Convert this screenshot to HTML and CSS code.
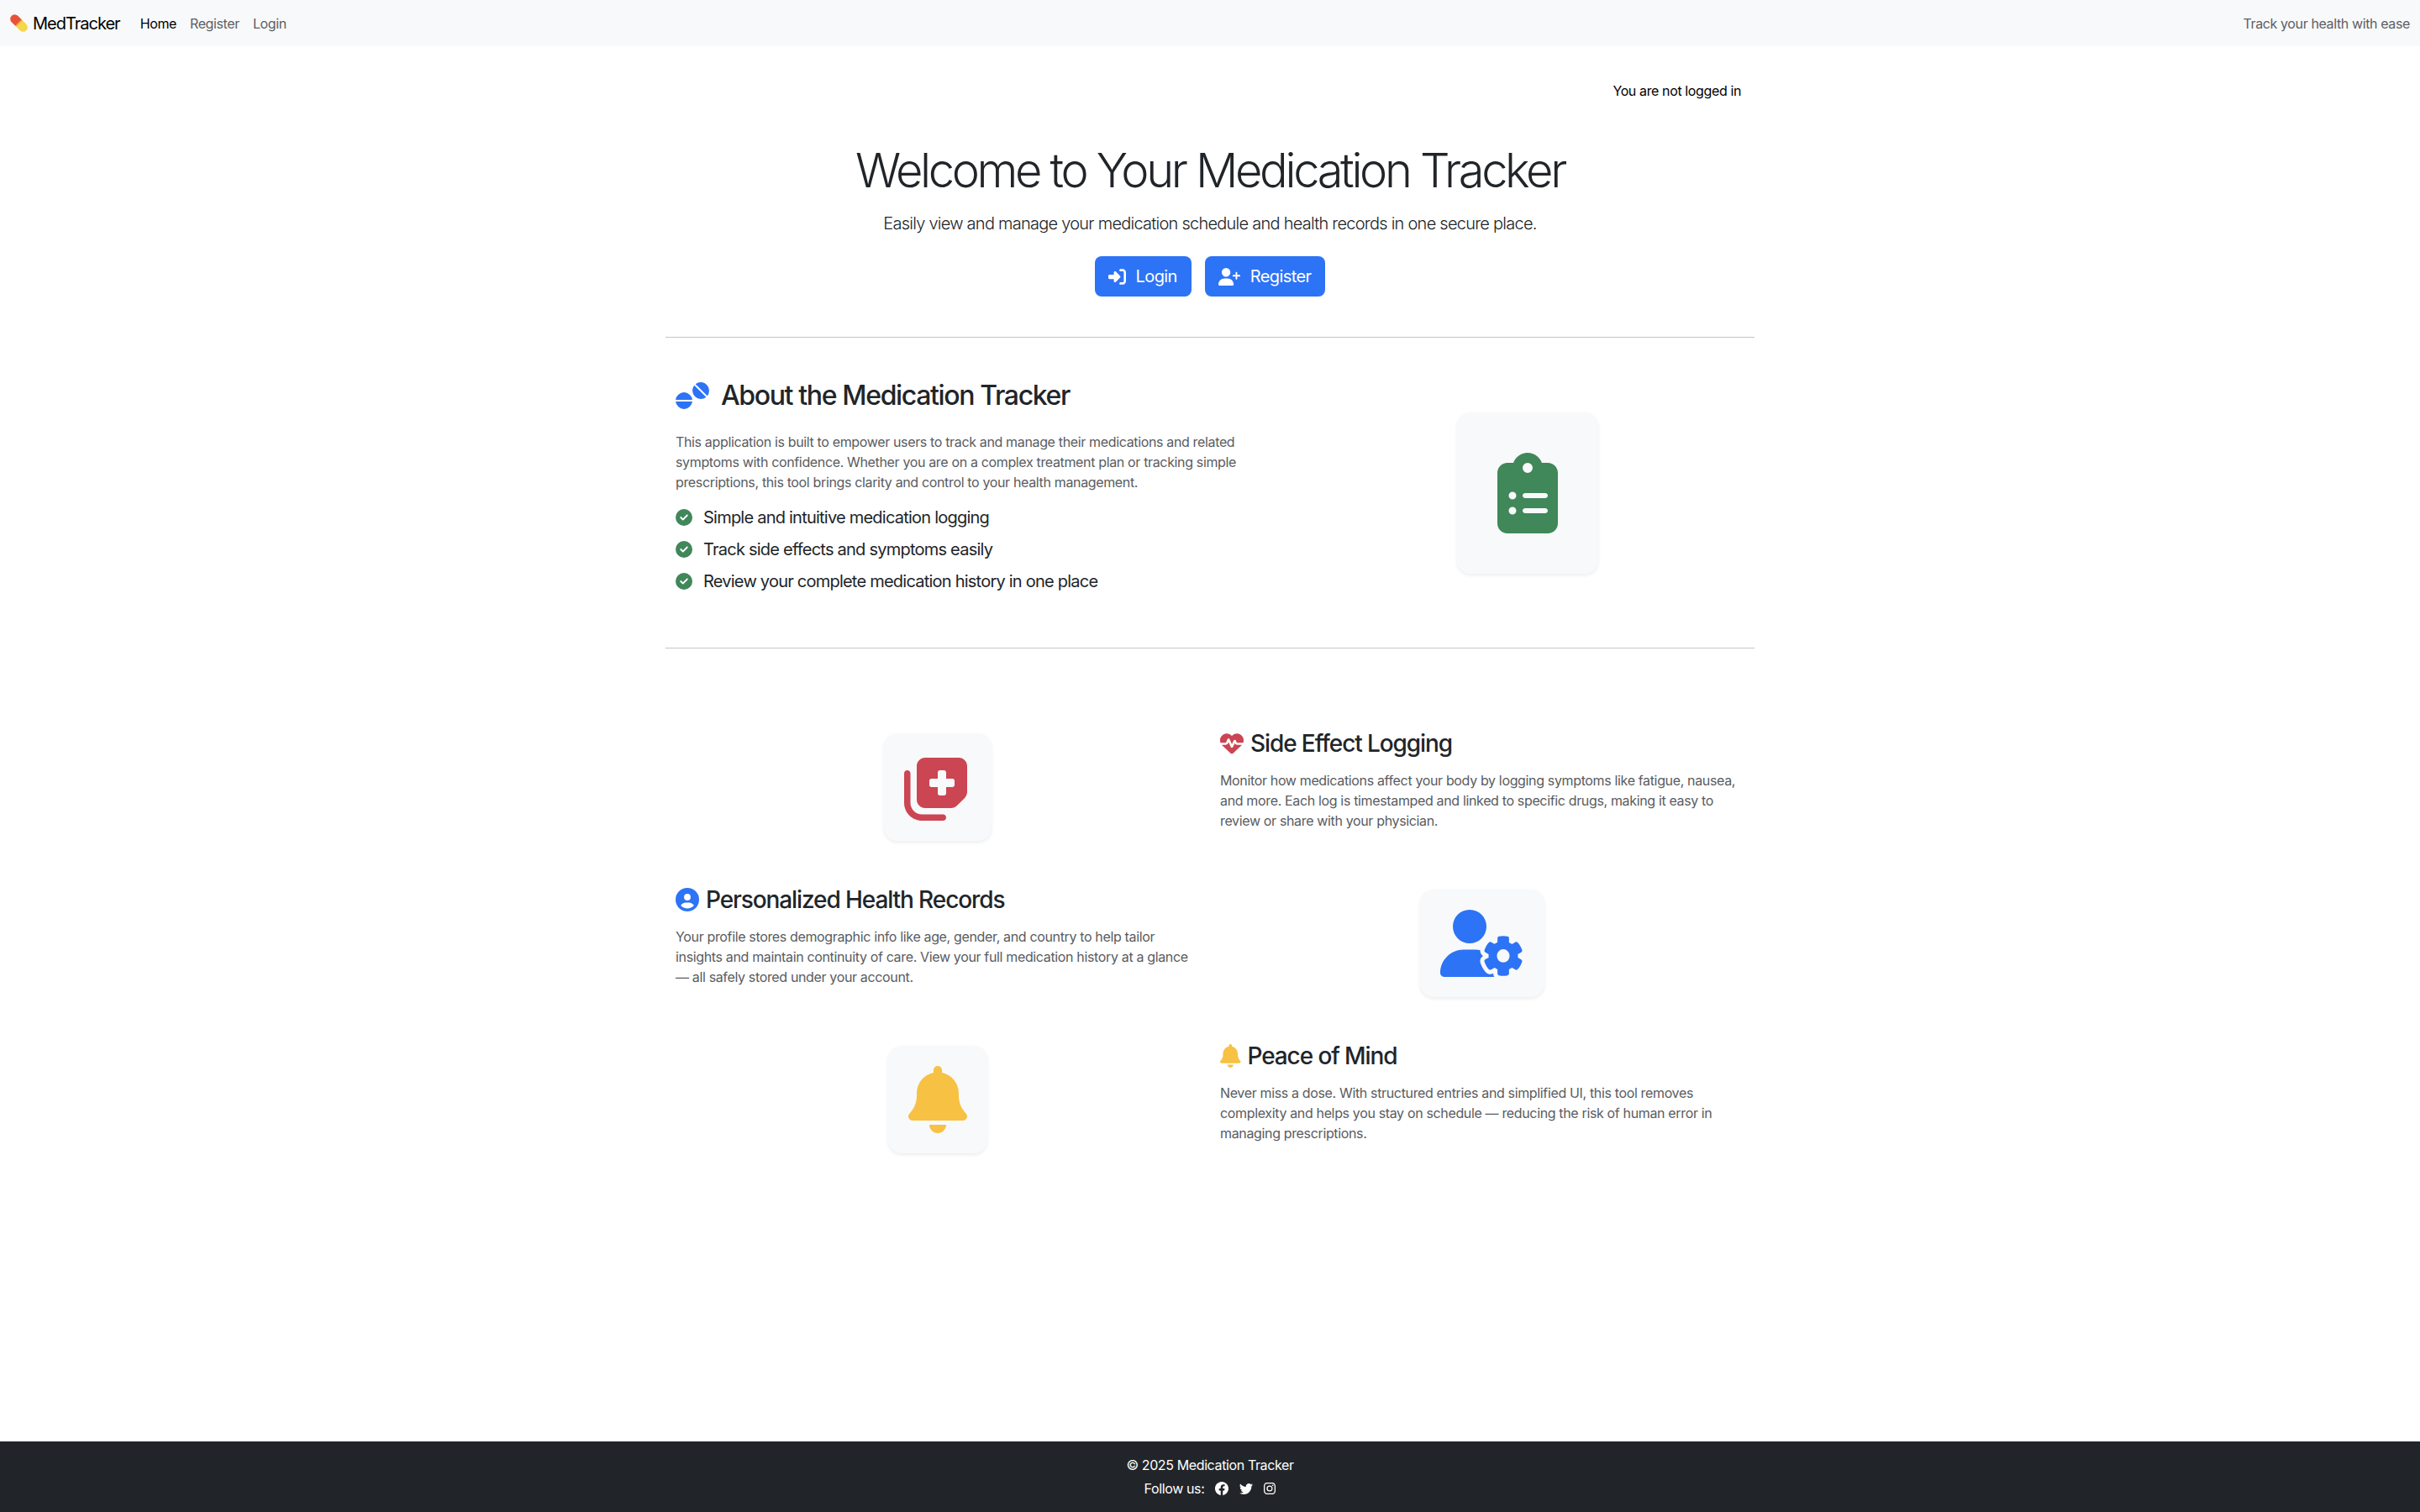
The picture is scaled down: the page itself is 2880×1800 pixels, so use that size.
FILE: index.html
```html
<!DOCTYPE html>
<html lang="en">
<head>
  <meta charset="utf-8">
  <title>Medication Tracker</title>
  <link rel="stylesheet" href="styles.css">
</head>
<body>
  <nav class="navbar">
    <a class="brand" href="#">
      <svg class="pill" viewBox="0 0 20 20">
        <g transform="rotate(45 10 10)">
          <path d="M10 5H3.2a5 5 0 0 0 0 10H10z" fill="#e8523a"/>
          <path d="M10 5h6.8a5 5 0 0 1 0 10H10z" fill="#f5d64c"/>
          <path d="M9 5h1.4v10H9z" fill="#f09a3e"/>
        </g>
      </svg>
      MedTracker
    </a>
    <a class="nav-link active" href="#">Home</a>
    <a class="nav-link" href="#">Register</a>
    <a class="nav-link" href="#">Login</a>
    <span class="nav-tagline">Track your health with ease</span>
  </nav>

  <main class="container">
    <div class="status">You are not logged in</div>

    <section class="hero">
      <h1>Welcome to Your Medication Tracker</h1>
      <p class="lead">Easily view and manage your medication schedule and health records in one secure place.</p>
      <div class="hero-buttons">
        <a class="btn" href="#">
          <svg class="btn-icon" viewBox="0 0 512 512"><path d="M217.9 105.9L340.7 228.7c7.2 7.2 11.3 17.1 11.3 27.3s-4.1 20.1-11.3 27.3L217.9 406.1c-6.4 6.4-15 9.9-24 9.9c-18.7 0-33.9-15.2-33.9-33.9l0-62.1L32 320c-17.7 0-32-14.3-32-32l0-64c0-17.7 14.3-32 32-32l128 0 0-62.1c0-18.7 15.2-33.9 33.9-33.9c9 0 17.6 3.6 24 9.9zM352 416l64 0c17.7 0 32-14.3 32-32l0-256c0-17.7-14.3-32-32-32l-64 0c-17.7 0-32-14.3-32-32s14.3-32 32-32l64 0c53 0 96 43 96 96l0 256c0 53-43 96-96 96l-64 0c-17.7 0-32-14.3-32-32s14.3-32 32-32z"/></svg>
          Login
        </a>
        <a class="btn" href="#">
          <svg class="btn-icon wide" viewBox="0 0 640 512"><path d="M96 128a128 128 0 1 1 256 0A128 128 0 1 1 96 128zM0 482.3C0 383.8 79.8 304 178.3 304h91.4C368.2 304 448 383.8 448 482.3c0 16.4-13.3 29.7-29.7 29.7H29.7C13.3 512 0 498.7 0 482.3zM504 312V248H440c-13.3 0-24-10.7-24-24s10.7-24 24-24h64V136c0-13.3 10.7-24 24-24s24 10.7 24 24v64h64c13.3 0 24 10.7 24 24s-10.7 24-24 24H552v64c0 13.3-10.7 24-24 24s-24-10.7-24-24z"/></svg>
          Register
        </a>
      </div>
    </section>

    <hr>

    <section class="about">
      <div class="about-text">
        <h2>
          <svg class="tablets" viewBox="0 0 640 512">
            <path d="M1 336A160 160 0 0 1 319 336ZM1 368A160 160 0 0 0 319 368Z"/>
            <g transform="rotate(45 480 160)"><path d="M321 144A160 160 0 0 1 639 144ZM321 176A160 160 0 0 0 639 176Z"/></g>
          </svg>
          About the Medication Tracker
        </h2>
        <p class="muted">This application is built to empower users to track and manage their medications and related symptoms with confidence. Whether you are on a complex treatment plan or tracking simple prescriptions, this tool brings clarity and control to your health management.</p>
        <ul class="checks">
          <li><svg class="check" viewBox="0 0 512 512"><path d="M256 512A256 256 0 1 0 256 0a256 256 0 1 0 0 512zM369 209L241 337c-9.4 9.4-24.6 9.4-33.9 0l-64-64c-9.4-9.4-9.4-24.6 0-33.9s24.6-9.4 33.9 0l47 47L335 175c9.4-9.4 24.6-9.4 33.9 0s9.4 24.6 0 33.9z"/></svg>Simple and intuitive medication logging</li>
          <li><svg class="check" viewBox="0 0 512 512"><path d="M256 512A256 256 0 1 0 256 0a256 256 0 1 0 0 512zM369 209L241 337c-9.4 9.4-24.6 9.4-33.9 0l-64-64c-9.4-9.4-9.4-24.6 0-33.9s24.6-9.4 33.9 0l47 47L335 175c9.4-9.4 24.6-9.4 33.9 0s9.4 24.6 0 33.9z"/></svg>Track side effects and symptoms easily</li>
          <li><svg class="check" viewBox="0 0 512 512"><path d="M256 512A256 256 0 1 0 256 0a256 256 0 1 0 0 512zM369 209L241 337c-9.4 9.4-24.6 9.4-33.9 0l-64-64c-9.4-9.4-9.4-24.6 0-33.9s24.6-9.4 33.9 0l47 47L335 175c9.4-9.4 24.6-9.4 33.9 0s9.4 24.6 0 33.9z"/></svg>Review your complete medication history in one place</li>
        </ul>
      </div>
      <div class="about-art">
        <div class="icon-card large">
          <svg class="green" viewBox="0 0 384 512"><path d="M192 0c-41.8 0-77.4 26.7-90.5 64H64C28.7 64 0 92.7 0 128V448c0 35.3 28.7 64 64 64H320c35.3 0 64-28.7 64-64V128c0-35.3-28.7-64-64-64H282.5C269.4 26.7 233.8 0 192 0zm0 64a32 32 0 1 1 0 64 32 32 0 1 1 0-64zM72 272a24 24 0 1 1 48 0 24 24 0 1 1 -48 0zm104-16H304c8.8 0 16 7.2 16 16s-7.2 16-16 16H176c-8.8 0-16-7.2-16-16s7.2-16 16-16zM72 368a24 24 0 1 1 48 0 24 24 0 1 1 -48 0zm88 0c0-8.8 7.2-16 16-16H304c8.8 0 16 7.2 16 16s-7.2 16-16 16H176c-8.8 0-16-7.2-16-16z"/></svg>
        </div>
      </div>
    </section>

    <hr class="flush">

    <section class="features">
      <div class="feature-art">
        <div class="icon-card">
          <svg class="red" viewBox="0 0 512 512"><path d="M96 352V96c0-35.3 28.7-64 64-64H416c35.3 0 64 28.7 64 64V293.5c0 17-6.7 33.3-18.7 45.3l-58.5 58.5c-12 12-28.3 18.7-45.3 18.7H160c-35.3 0-64-28.7-64-64zM272 128c-8.8 0-16 7.2-16 16v48H208c-8.8 0-16 7.2-16 16v32c0 8.8 7.2 16 16 16h48v48c0 8.8 7.2 16 16 16h32c8.8 0 16-7.2 16-16V256h48c8.8 0 16-7.2 16-16V208c0-8.8-7.2-16-16-16H320V144c0-8.8-7.2-16-16-16H272zm24 336c13.3 0 24 10.7 24 24s-10.7 24-24 24H136C60.9 512 0 451.1 0 376V152c0-13.3 10.7-24 24-24s24 10.7 24 24l0 224c0 48.6 39.4 88 88 88H296z"/></svg>
        </div>
      </div>
      <div class="feature-text">
        <h3><svg class="h3-icon red" viewBox="0 0 512 512"><path d="M228.3 469.1L47.6 300.4c-4.2-3.9-8.2-8.1-11.9-12.4h87c22.6 0 43-13.6 51.7-34.5l10.5-25.2 49.3 109.5c3.8 8.5 12.1 14 21.4 14.1s17.8-5 22-13.3L320 253.7l1.7 3.4c9.5 19 28.9 31 50.1 31H476.3c-3.7 4.3-7.7 8.5-11.9 12.4L283.7 469.1c-7.5 7-17.4 10.9-27.7 10.9s-20.2-3.9-27.7-10.9zM503.7 240h-132c-3 0-5.8-1.7-7.2-4.4l-23.2-46.3c-4.1-8.1-12.4-13.3-21.5-13.3s-17.4 5.1-21.5 13.3l-41.4 82.8L205.9 158.2c-3.9-8.7-12.7-14.3-22.2-14.1s-18.1 5.9-21.8 14.8l-31.8 76.3c-1.2 3-4.2 4.9-7.4 4.9H16c-2.6 0-5 .4-7.3 1.1C3 225.2 0 208.2 0 190.9v-5.8c0-69.9 50.5-129.5 119.4-141C165 36.5 211.4 51.4 244 84l12 12 12-12c32.6-32.6 79-47.5 124.6-39.9C461.5 55.6 512 115.2 512 185.1v5.8c0 16.9-2.8 33.5-8.3 49.1z"/></svg>Side Effect Logging</h3>
        <p class="muted">Monitor how medications affect your body by logging symptoms like fatigue, nausea, and more. Each log is timestamped and linked to specific drugs, making it easy to review or share with your physician.</p>
      </div>

      <div class="feature-text">
        <h3><svg class="h3-icon blue" viewBox="0 0 512 512"><path d="M399 384.2C376.9 345.8 335.4 320 288 320H224c-47.4 0-88.9 25.8-111 64.2c35.2 39.2 86.2 63.8 143 63.8s107.8-24.7 143-63.8zM0 256a256 256 0 1 1 512 0A256 256 0 1 1 0 256zm256 16a72 72 0 1 0 0-144 72 72 0 1 0 0 144z"/></svg>Personalized Health Records</h3>
        <p class="muted">Your profile stores demographic info like age, gender, and country to help tailor insights and maintain continuity of care. View your full medication history at a glance — all safely stored under your account.</p>
      </div>
      <div class="feature-art">
        <div class="icon-card">
          <svg class="blue" viewBox="0 0 640 512"><path d="M224 0a128 128 0 1 1 0 256A128 128 0 1 1 224 0zM178.3 304h91.4c11.8 0 23.4 1.2 34.5 3.3c-2.1 18.5 7.4 35.6 21.8 44.8c-16.6 10.6-26.7 31.6-20 53.3c4 12.9 9.4 25.5 16.4 37.6s15.2 23.1 24.4 33c15.7 16.9 39.6 18.4 57.2 8.7v.9c0 9.2 2.7 18.5 7.9 26.3H29.7C13.3 512 0 498.7 0 482.3C0 383.8 79.8 304 178.3 304zM436 218.2c0-7 4.5-13.3 11.3-14.8c10.5-2.4 21.5-3.7 32.7-3.7s22.2 1.3 32.7 3.7c6.8 1.5 11.3 7.8 11.3 14.8v30.6c7.9 3.4 15.4 7.7 22.3 12.8l24.9-14.3c6.1-3.5 13.7-2.7 18.5 2.4c7.6 8.1 14.3 17.2 20.1 27.2s10.3 20.4 13.5 31c2.1 6.7-1.1 13.7-7.2 17.2l-25 14.4c.4 4 .7 8.1 .7 12.3s-.2 8.2-.7 12.3l25 14.4c6.1 3.5 9.2 10.5 7.2 17.2c-3.3 10.6-7.8 21-13.5 31s-12.5 19.1-20.1 27.2c-4.8 5.1-12.5 5.9-18.5 2.4l-24.9-14.3c-6.9 5.1-14.3 9.4-22.3 12.8l0 30.6c0 7-4.5 13.3-11.3 14.8c-10.5 2.4-21.5 3.7-32.7 3.7s-22.2-1.3-32.7-3.7c-6.8-1.5-11.3-7.8-11.3-14.8V454.8c-8-3.4-15.6-7.7-22.5-12.9l-24.7 14.3c-6.1 3.5-13.7 2.7-18.5-2.4c-7.6-8.1-14.3-17.2-20.1-27.2s-10.3-20.4-13.5-31c-2.1-6.7 1.1-13.7 7.2-17.2l25-14.4c-.4-4-.7-8.1-.7-12.3s.2-8.2 .7-12.3l-25-14.4c-6.1-3.5-9.2-10.5-7.2-17.2c3.3-10.6 7.7-21 13.5-31s12.5-19.1 20.1-27.2c4.8-5.1 12.4-5.9 18.5-2.4l24.8 14.3c6.9-5.1 14.5-9.4 22.5-12.8V218.2zm92.1 133.5a48.1 48.1 0 1 0 -96.1 0 48.1 48.1 0 1 0 96.1 0z"/></svg>
        </div>
      </div>

      <div class="feature-art">
        <div class="icon-card">
          <svg class="yellow" viewBox="0 0 448 512"><path d="M224 0c-17.7 0-32 14.3-32 32V51.2C119 66 64 130.6 64 208v18.8c0 47-17.3 92.4-48.5 127.6l-7.4 8.3c-8.4 9.4-10.4 22.9-5.3 34.4S19.4 416 32 416H416c12.6 0 24-7.4 29.2-18.9s3.1-25-5.3-34.4l-7.4-8.3C401.3 319.2 384 273.9 384 226.8V208c0-77.4-55-142-128-156.8V32c0-17.7-14.3-32-32-32zm45.3 493.3c12-12 18.7-28.3 18.7-45.3H224 160c0 17 6.7 33.3 18.7 45.3s28.3 18.7 45.3 18.7s33.3-6.7 45.3-18.7z"/></svg>
        </div>
      </div>
      <div class="feature-text">
        <h3><svg class="h3-icon yellow" viewBox="0 0 448 512"><path d="M224 0c-17.7 0-32 14.3-32 32V51.2C119 66 64 130.6 64 208v18.8c0 47-17.3 92.4-48.5 127.6l-7.4 8.3c-8.4 9.4-10.4 22.9-5.3 34.4S19.4 416 32 416H416c12.6 0 24-7.4 29.2-18.9s3.1-25-5.3-34.4l-7.4-8.3C401.3 319.2 384 273.9 384 226.8V208c0-77.4-55-142-128-156.8V32c0-17.7-14.3-32-32-32zm45.3 493.3c12-12 18.7-28.3 18.7-45.3H224 160c0 17 6.7 33.3 18.7 45.3s28.3 18.7 45.3 18.7s33.3-6.7 45.3-18.7z"/></svg>Peace of Mind</h3>
        <p class="muted">Never miss a dose. With structured entries and simplified UI, this tool removes complexity and helps you stay on schedule — reducing the risk of human error in managing prescriptions.</p>
      </div>
    </section>
  </main>

  <footer class="footer">
    <div class="copyright">© 2025 Medication Tracker</div>
    <div class="follow">
      <span>Follow us:</span>
      <svg class="social" viewBox="0 0 16 16"><path d="M16 8.049c0-4.446-3.582-8.05-8-8.05C3.58 0-.002 3.603-.002 8.05c0 4.017 2.926 7.347 6.75 7.951v-5.625h-2.03V8.05H6.75V6.275c0-2.017 1.195-3.131 3.022-3.131.876 0 1.791.157 1.791.157v1.98h-1.009c-.993 0-1.303.621-1.303 1.258v1.51h2.218l-.354 2.326H9.25V16c3.824-.604 6.75-3.934 6.75-7.951"/></svg>
      <svg class="social" viewBox="0 0 16 16"><path d="M5.026 15c6.038 0 9.341-5.003 9.341-9.334q.002-.211-.006-.422A6.7 6.7 0 0 0 16 3.542a6.7 6.7 0 0 1-1.889.518 3.3 3.3 0 0 0 1.447-1.817 6.5 6.5 0 0 1-2.087.793A3.286 3.286 0 0 0 7.875 6.03a9.32 9.32 0 0 1-6.767-3.429 3.29 3.29 0 0 0 1.018 4.382A3.3 3.3 0 0 1 .64 6.575v.045a3.29 3.29 0 0 0 2.632 3.218 3.2 3.2 0 0 1-.865.115 3 3 0 0 1-.614-.057 3.28 3.28 0 0 0 3.067 2.277A6.6 6.6 0 0 1 .78 13.58a6 6 0 0 1-.78-.045A9.34 9.34 0 0 0 5.026 15"/></svg>
      <svg class="social small" viewBox="0 0 16 16"><path d="M8 0C5.829 0 5.556.01 4.703.048 3.85.088 3.269.222 2.76.42a3.9 3.9 0 0 0-1.417.923A3.9 3.9 0 0 0 .42 2.76C.222 3.268.087 3.85.048 4.7.01 5.555 0 5.827 0 8.001c0 2.172.01 2.444.048 3.297.04.852.174 1.433.372 1.942.205.526.478.972.923 1.417.444.445.89.719 1.416.923.51.198 1.09.333 1.942.372C5.555 15.99 5.827 16 8 16s2.444-.01 3.298-.048c.851-.04 1.434-.174 1.943-.372a3.9 3.9 0 0 0 1.416-.923c.445-.445.718-.891.923-1.417.197-.509.332-1.09.372-1.942C15.99 10.445 16 10.173 16 8s-.01-2.445-.048-3.299c-.04-.851-.175-1.433-.372-1.941a3.9 3.9 0 0 0-.923-1.417A3.9 3.9 0 0 0 13.24.42c-.51-.198-1.092-.333-1.943-.372C10.443.01 10.172 0 7.998 0zm-.717 1.442h.718c2.136 0 2.389.007 3.232.046.78.035 1.204.166 1.486.275.373.145.64.319.92.599s.453.546.598.92c.11.281.24.705.275 1.485.039.843.047 1.096.047 3.231s-.008 2.389-.047 3.232c-.035.78-.166 1.203-.275 1.485a2.5 2.5 0 0 1-.599.919c-.28.28-.546.453-.92.598-.28.11-.704.24-1.485.276-.843.038-1.096.047-3.232.047s-2.39-.009-3.233-.047c-.78-.036-1.203-.166-1.485-.276a2.5 2.5 0 0 1-.92-.598 2.5 2.5 0 0 1-.6-.92c-.109-.281-.24-.705-.275-1.485-.038-.843-.046-1.096-.046-3.233s.008-2.388.046-3.231c.036-.78.166-1.204.276-1.486.145-.373.319-.64.599-.92s.546-.453.92-.598c.282-.11.705-.24 1.485-.276.738-.034 1.024-.044 2.515-.045zm4.988 1.328a.96.96 0 1 0 0 1.92.96.96 0 0 0 0-1.92m-4.27 1.122a4.109 4.109 0 1 0 0 8.217 4.109 4.109 0 0 0 0-8.217m0 1.441a2.667 2.667 0 1 1 0 5.334 2.667 2.667 0 0 1 0-5.334"/></svg>
    </div>
  </footer>
</body>
</html>
```

FILE: styles.css
```css
* {
  box-sizing: border-box;
}

body {
  margin: 0;
  min-height: 100vh;
  display: flex;
  flex-direction: column;
  font-family: "Inter", "Liberation Sans", sans-serif;
  font-size: 16px;
  line-height: 24px;
  letter-spacing: -0.38px;
  color: #212529;
  background: #fff;
}

a {
  text-decoration: none;
}

svg {
  fill: currentColor;
}

.green { color: #40875a; }
.red { color: #cc4552; }
.blue { color: #2d73f5; }
.yellow { color: #f7c143; }

/* navbar */
.navbar {
  display: flex;
  align-items: center;
  height: 55px;
  padding: 0 12px;
  background: #f8f9fa;
}

.brand {
  display: flex;
  align-items: center;
  gap: 6px;
  margin-right: 16px;
  font-size: 20px;
  line-height: 30px;
  letter-spacing: -1px;
  color: #000;
}

.pill {
  width: 21px;
  height: 21px;
}

.nav-link {
  padding: 8px;
  color: #5c6065;
}

.nav-link.active {
  color: #000;
}

.nav-tagline {
  margin-left: auto;
  color: #5c6065;
}

/* page */
.container {
  flex: 1;
  width: 1320px;
  margin: 0 auto;
  padding: 0 12px;
}

.status {
  margin-top: 41px;
  padding-right: 16px;
  text-align: right;
  color: #000;
}

.hero {
  margin-top: 50px;
  text-align: center;
}

.hero h1 {
  margin: 0;
  font-size: 56px;
  font-weight: 300;
  line-height: 67px;
  letter-spacing: -3.36px;
}

.lead {
  margin: 14px 0 0;
  font-size: 20px;
  font-weight: 300;
  line-height: 30px;
  letter-spacing: -0.75px;
}

.hero-buttons {
  display: flex;
  justify-content: center;
  gap: 16px;
  margin-top: 24px;
}

.btn {
  display: flex;
  align-items: center;
  gap: 12px;
  height: 48px;
  padding: 0 17px 0 16px;
  border-radius: 8px;
  background: #2d73f5;
  color: #fff;
  font-size: 20px;
  letter-spacing: -0.6px;
}

.btn-icon {
  width: 21px;
  height: 21px;
}

.btn-icon.wide {
  width: 26px;
}

hr {
  margin: 48px 0 0;
  border: 0;
  border-top: 1px solid #c4c5c6;
}

hr.flush {
  margin-top: 0;
}

/* about */
.about {
  display: grid;
  grid-template-columns: 756px 540px;
  align-items: center;
  height: 369px;
}

.about-text {
  padding: 0 12px 10px;
}

.about-art {
  display: flex;
  justify-content: center;
}

.about h2 {
  display: flex;
  align-items: center;
  gap: 14px;
  margin: 0 0 24px;
  font-size: 32px;
  font-weight: 500;
  line-height: 38px;
  letter-spacing: -1.36px;
}

.tablets {
  width: 40px;
  height: 32px;
  color: #2d73f5;
}

.muted {
  margin: 0;
  letter-spacing: -0.35px;
  color: #595c61;
}

.feature-text .muted {
  margin-bottom: 16px;
}

.checks {
  margin: 11px 0 0;
  padding: 0;
  list-style: none;
  font-size: 20px;
  line-height: 38px;
  letter-spacing: -0.77px;
}

.checks li {
  display: flex;
  align-items: center;
  gap: 13px;
}

.check {
  width: 20px;
  height: 20px;
  color: #40875a;
}

/* feature rows */
.features {
  display: grid;
  grid-template-columns: 648px 648px;
  row-gap: 49px;
  align-items: center;
  margin-top: 96px;
}

.feature-art {
  display: flex;
  justify-content: center;
}

.feature-text {
  padding: 0 12px;
}

.feature-text h3 {
  display: flex;
  align-items: center;
  gap: 8px;
  margin: 0 0 15px;
  font-size: 28px;
  font-weight: 500;
  line-height: 34px;
  letter-spacing: -1.1px;
}

.h3-icon {
  height: 28px;
}

.icon-card {
  padding: 24px;
  border-radius: 16px;
  background: #f8f9fa;
  box-shadow: 0 2px 4px rgba(0, 0, 0, 0.075);
}

.icon-card svg {
  display: block;
  height: 80px;
}

.icon-card.large {
  padding: 48px;
}

.icon-card.large svg {
  height: 96px;
}

/* footer */
.footer {
  height: 84px;
  padding-top: 16px;
  background: #212529;
  color: #fff;
  text-align: center;
}

.follow {
  display: flex;
  justify-content: center;
  align-items: center;
  gap: 13px;
  margin-top: 4px;
}

.social {
  width: 16px;
  height: 16px;
}

.social.small {
  width: 14px;
  height: 14px;
}
```
